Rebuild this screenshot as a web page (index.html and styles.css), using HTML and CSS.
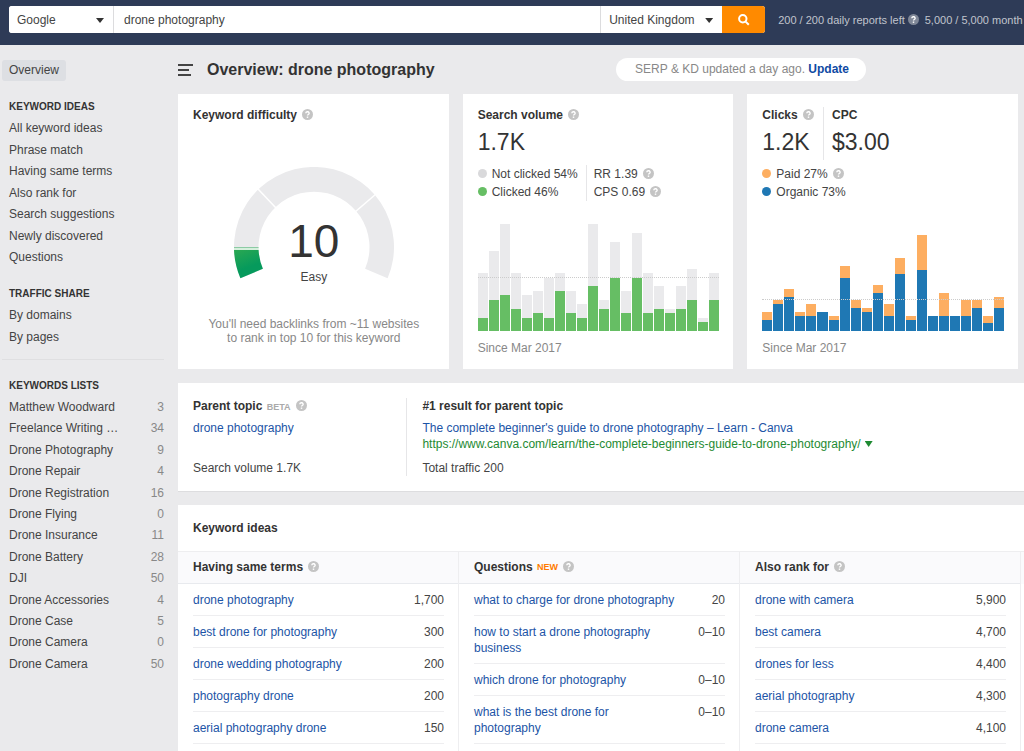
FILE: index.html
```html
<!DOCTYPE html>
<html lang="en">
<head>
<meta charset="utf-8">
<meta name="viewport" content="width=device-width, initial-scale=1">
<title>Overview: drone photography</title>
<link rel="stylesheet" href="styles.css">
</head>
<body>
<svg class="sprite" aria-hidden="true">
  <symbol id="help" viewBox="0 0 12 12">
    <circle cx="6" cy="6" r="6" fill="currentColor"/>
    <path class="help-mark" d="M4.2 4.7a1.8 1.6 0 1 1 2.7 1.3c-.6.4-.9.6-.9 1.2"/>
    <rect class="help-dot" x="5.2" y="8.2" width="1.6" height="1.5"/>
  </symbol>
</svg>

<header class="topbar">
  <form class="search">
    <label class="picker engine"><select aria-label="Search engine"><option>Google</option></select></label>
    <input class="query" type="text" aria-label="Keyword" value="drone photography">
    <label class="picker country"><select aria-label="Country"><option>United Kingdom</option></select></label>
    <button class="go" type="button" aria-label="Search">
      <svg viewBox="0 0 12 12"><circle cx="4.8" cy="4.8" r="3.7"/><path d="M7.6 7.6l3.2 3.2"/></svg>
    </button>
  </form>
  <div class="quota">
    <span>200 / 200 daily reports left</span>
    <svg class="help"><use href="#help"/></svg>
    <span class="rows">5,000 / 5,000 month</span>
  </div>
</header>

<div class="page">
  <nav class="sidebar">
    <a class="current" href="#">Overview</a>
    <h2>KEYWORD IDEAS</h2>
    <ul class="ideas-nav">
      <li><a href="#">All keyword ideas</a></li>
      <li><a href="#">Phrase match</a></li>
      <li><a href="#">Having same terms</a></li>
      <li><a href="#">Also rank for</a></li>
      <li><a href="#">Search suggestions</a></li>
      <li><a href="#">Newly discovered</a></li>
      <li><a href="#">Questions</a></li>
    </ul>
    <h2>TRAFFIC SHARE</h2>
    <ul>
      <li><a href="#">By domains</a></li>
      <li><a href="#">By pages</a></li>
    </ul>
    <hr>
    <h2>KEYWORDS LISTS</h2>
    <ul class="lists-nav">
      <li><a href="#">Matthew Woodward</a><span>3</span></li>
      <li><a href="#">Freelance Writing …</a><span>34</span></li>
      <li><a href="#">Drone Photography</a><span>9</span></li>
      <li><a href="#">Drone Repair</a><span>4</span></li>
      <li><a href="#">Drone Registration</a><span>16</span></li>
      <li><a href="#">Drone Flying</a><span>0</span></li>
      <li><a href="#">Drone Insurance</a><span>11</span></li>
      <li><a href="#">Drone Battery</a><span>28</span></li>
      <li><a href="#">DJI</a><span>50</span></li>
      <li><a href="#">Drone Accessories</a><span>4</span></li>
      <li><a href="#">Drone Case</a><span>5</span></li>
      <li><a href="#">Drone Camera</a><span>0</span></li>
      <li><a href="#">Drone Camera</a><span>50</span></li>
    </ul>
  </nav>

  <main class="main">
    <div class="titlebar">
      <button class="menu" type="button" aria-label="Toggle menu">
        <svg viewBox="0 0 15 12"><path d="M0 1h15M0 6h11M0 11h13"/></svg>
      </button>
      <h1>Overview: drone photography</h1>
      <p class="notice">SERP &amp; KD updated a day ago. <a href="#">Update</a></p>
    </div>

    <div class="cards">
      <section class="card">
        <h3>Keyword difficulty <svg class="help"><use href="#help"/></svg></h3>
        <div class="gauge">
          <svg viewBox="0 0 160 112">
            <defs>
              <linearGradient id="easy" x1="0" y1="0" x2="0.4" y2="1">
                <stop offset="0" stop-color="#2aa852"/><stop offset="0.7" stop-color="#069a5c"/>
              </linearGradient>
            </defs>
            <path fill="#eaeaec" d="M6.4 111.3A80 80 0 1 1 153.6 111.3L131.1 101.8A55.5 55.5 0 1 0 28.9 101.8Z"/>
            <path stroke="#fff" stroke-width="1.6" d="M24 22L42 41M142 27L121 45"/>
            <path fill="#d5efdc" d="M0 80H24.5V83H0Z"/>
            <path fill="#8ccba4" d="M0 80H24.5V81H0Z"/>
            <path fill="url(#easy)" d="M0 83A80 80 0 0 0 6.4 111.3L28.9 101.8A55.5 55.5 0 0 1 24.6 83Z"/>
          </svg>
          <p class="score"><strong>10</strong><span>Easy</span></p>
        </div>
        <p class="advice">You'll need backlinks from ~11 websites<br>to rank in top 10 for this keyword</p>
      </section>

      <section class="card">
        <h3>Search volume <svg class="help"><use href="#help"/></svg></h3>
        <p class="big">1.7K</p>
        <div class="legend">
          <ul>
            <li class="dot gray">Not clicked 54%</li>
            <li class="dot green">Clicked 46%</li>
          </ul>
          <ul class="ratios">
            <li>RR 1.39 <svg class="help"><use href="#help"/></svg></li>
            <li>CPS 0.69 <svg class="help"><use href="#help"/></svg></li>
          </ul>
        </div>
        <div class="chart volume">
          <i style="--t:13;--v:3"></i><i style="--t:18;--v:7"></i><i style="--t:24;--v:8"></i><i style="--t:13;--v:5"></i><i style="--t:8;--v:3"></i><i style="--t:9;--v:4"></i><i style="--t:12;--v:3"></i><i style="--t:13;--v:9"></i><i style="--t:9;--v:4"></i><i style="--t:6;--v:3"></i><i style="--t:24;--v:10"></i>
          <i style="--t:7;--v:5"></i><i style="--t:20;--v:12"></i><i style="--t:9;--v:4"></i><i style="--t:22;--v:12"></i><i style="--t:13;--v:4"></i><i style="--t:10;--v:5"></i><i style="--t:5;--v:4"></i><i style="--t:10;--v:5"></i><i style="--t:14;--v:7"></i><i style="--t:3;--v:2"></i><i style="--t:13;--v:7"></i>
        </div>
        <p class="since">Since Mar 2017</p>
      </section>

      <section class="card">
        <div class="pair">
          <div><h3>Clicks <svg class="help"><use href="#help"/></svg></h3><p class="big">1.2K</p></div>
          <div class="cpc"><h3>CPC</h3><p class="big">$3.00</p></div>
        </div>
        <div class="legend">
          <ul>
            <li class="dot orange">Paid 27% <svg class="help"><use href="#help"/></svg></li>
            <li class="dot blue">Organic 73%</li>
          </ul>
        </div>
        <div class="chart clicks">
          <i style="--t:5;--v:3"></i><i style="--t:8;--v:7"></i><i style="--t:11;--v:9"></i><i style="--t:5;--v:4"></i><i style="--t:7;--v:4"></i><i style="--t:5;--v:5"></i><i style="--t:4;--v:3"></i><i style="--t:17;--v:14"></i><i style="--t:8;--v:6"></i><i style="--t:6;--v:5"></i><i style="--t:12;--v:10"></i>
          <i style="--t:7;--v:4"></i><i style="--t:19;--v:15"></i><i style="--t:4;--v:3"></i><i style="--t:25;--v:16"></i><i style="--t:4;--v:4"></i><i style="--t:10;--v:4"></i><i style="--t:4;--v:4"></i><i style="--t:8;--v:4"></i><i style="--t:8;--v:6"></i><i style="--t:4;--v:2"></i><i style="--t:9;--v:6"></i>
        </div>
        <p class="since">Since Mar 2017</p>
      </section>
    </div>

    <section class="panel parent">
      <div class="topic">
        <h3>Parent topic <small class="beta">BETA</small> <svg class="help"><use href="#help"/></svg></h3>
        <a href="#">drone photography</a>
        <p>Search volume 1.7K</p>
      </div>
      <div class="result">
        <h3>#1 result for parent topic</h3>
        <a href="#">The complete beginner's guide to drone photography – Learn - Canva</a>
        <a class="url" href="#">https://www.canva.com/learn/the-complete-beginners-guide-to-drone-photography/</a>
        <p>Total traffic 200</p>
      </div>
    </section>

    <section class="panel ideas">
      <h3 class="ideas-title">Keyword ideas</h3>
      <div class="columns">
        <div class="column">
          <h3>Having same terms <svg class="help"><use href="#help"/></svg></h3>
          <table>
            <tr><td><a href="#">drone photography</a></td><td>1,700</td></tr>
            <tr><td><a href="#">best drone for photography</a></td><td>300</td></tr>
            <tr><td><a href="#">drone wedding photography</a></td><td>200</td></tr>
            <tr><td><a href="#">photography drone</a></td><td>200</td></tr>
            <tr><td><a href="#">aerial photography drone</a></td><td>150</td></tr>
          </table>
        </div>
        <div class="column">
          <h3>Questions <small class="new">NEW</small> <svg class="help"><use href="#help"/></svg></h3>
          <table>
            <tr><td><a href="#">what to charge for drone photography</a></td><td>20</td></tr>
            <tr><td><a href="#">how to start a drone photography<br>business</a></td><td>0–10</td></tr>
            <tr><td><a href="#">which drone for photography</a></td><td>0–10</td></tr>
            <tr><td><a href="#">what is the best drone for<br>photography</a></td><td>0–10</td></tr>
          </table>
        </div>
        <div class="column">
          <h3>Also rank for <svg class="help"><use href="#help"/></svg></h3>
          <table>
            <tr><td><a href="#">drone with camera</a></td><td>5,900</td></tr>
            <tr><td><a href="#">best camera</a></td><td>4,700</td></tr>
            <tr><td><a href="#">drones for less</a></td><td>4,400</td></tr>
            <tr><td><a href="#">aerial photography</a></td><td>4,300</td></tr>
            <tr><td><a href="#">drone camera</a></td><td>4,100</td></tr>
          </table>
        </div>
      </div>
    </section>
  </main>
</div>
</body>
</html>
```
FILE: styles.css
```css
* { box-sizing: border-box; }

body {
  margin: 0;
  min-height: 100vh;
  display: flex;
  flex-direction: column;
  background: #eaeaec;
  color: #444;
  font: 12px/16px "Liberation Sans", Arial, sans-serif;
}

h1, h2, h3, p, ul { margin: 0; padding: 0; }
ul { list-style: none; }
a { color: #1c54a6; text-decoration: none; }
h3 { font-size: 12px; line-height: 16px; color: #333; }
button { border: 0; padding: 0; background: none; }
select, input { font: inherit; color: #444; border: 0; outline: 0; background: #fff; }

.sprite { position: absolute; width: 0; height: 0; }
.help { width: 11px; height: 11px; margin-left: 2px; color: #c4c4c4; vertical-align: -1px; }
.help-mark { fill: none; stroke: #fff; stroke-width: 1.5px; }
.help-dot { fill: #fff; }

/* Top bar */
.topbar {
  display: flex;
  align-items: flex-start;
  height: 45px;
  padding: 6px 0 0 9px;
  background: #2e3b57;
  overflow: hidden;
}
.search {
  display: flex;
  flex: 0 0 auto;
  width: 74.5%;
  height: 27px;
  border-radius: 3px;
  overflow: hidden;
  background: #fff;
}
.picker { position: relative; display: flex; }
.picker select { width: 100%; padding: 0 8px; appearance: none; }
.picker::after {
  content: "";
  position: absolute;
  right: 9px;
  top: 12px;
  width: 8px;
  height: 5px;
  background: #333;
  clip-path: polygon(0 0, 100% 0, 50% 100%);
  pointer-events: none;
}
.engine { width: 105px; border-right: 1px solid #dcdcde; }
.country { width: 122px; border-left: 1px solid #dcdcde; }
.query { flex: 1; min-width: 0; padding: 0 10px; }
.go {
  display: grid;
  place-items: center;
  width: 43px;
  background: #ff8a00;
}
.go svg { width: 12px; height: 12px; fill: none; stroke: #fff; stroke-width: 2px; }
.quota {
  display: flex;
  align-items: center;
  height: 27px;
  margin-left: 13px;
  gap: 3px;
  white-space: nowrap;
  font-size: 11px;
  color: #c0c4cd;
}
.quota .help { margin-left: 0; color: #7f8797; }
.quota .help-mark { stroke: #2e3b57; }
.quota .rows { margin-left: 3px; }

.page { display: flex; flex: 1; }

/* Sidebar */
.sidebar { flex: 0 0 178px; padding: 15px 14px 0 2px; }
.sidebar a { color: #444; }
.sidebar .current {
  display: inline-block;
  padding: 0 7px;
  line-height: 21px;
  border-radius: 3px;
  background: #dddfe3;
}
.sidebar h2 {
  margin: 19px 0 4px 7px;
  font-size: 10px;
  line-height: 14px;
  color: #333;
}
.sidebar ul {
  display: grid;
  align-content: space-between;
  min-height: 43px;
  padding-left: 7px;
  line-height: 21px;
}
.sidebar .ideas-nav { min-height: 150px; }
.sidebar .lists-nav { min-height: 278px; }
.sidebar li { display: flex; justify-content: space-between; }
.sidebar li span { color: #888; }
.sidebar hr { margin: 11px 0 0; border: 0; border-top: 1px solid #dfdfe1; }

/* Main area */
.main { flex: 1; min-width: 0; display: flex; flex-direction: column; }
.titlebar {
  display: flex;
  align-items: center;
  height: 49px;
  padding-right: 158px;
}
.menu { display: flex; margin-right: 14px; }
.menu svg { width: 15px; height: 12px; stroke: #444; stroke-width: 2px; }
h1 { font-size: 16px; line-height: 20px; color: #333; }
.notice {
  margin-left: auto;
  padding: 0 17px 0 19px;
  line-height: 23px;
  border-radius: 12px;
  background: #fff;
  color: #888;
}
.notice a { font-weight: bold; color: #0f4aa3; }

.cards {
  display: grid;
  grid-template-columns: repeat(3, 1fr);
  gap: 14px;
  padding-right: 6px;
}
.card { padding: 13px 14px 13px 15px; background: #fff; }
.big { margin-top: 5px; font-size: 23px; line-height: 28px; color: #333; }

.gauge {
  display: grid;
  justify-items: center;
  margin: 44px 0 38px;
}
.gauge svg, .score { grid-area: 1 / 1; }
.gauge svg { width: 160px; height: 112px; }
.score { align-self: end; text-align: center; }
.score strong, .score span { display: block; }
.score strong {
  margin-bottom: 5px;
  font-size: 46px;
  line-height: 48px;
  font-weight: normal;
  color: #333;
}
.score span { line-height: 14px; margin-bottom: -5px; }
.advice { text-align: center; line-height: 14px; color: #888; }

.legend { display: flex; margin-top: 9px; line-height: 18px; }
.dot::before {
  content: "";
  display: inline-block;
  width: 9px;
  height: 9px;
  margin-right: 5px;
  border-radius: 50%;
  background: var(--dot);
}
.gray { --dot: #d9d9db; }
.green { --dot: #66be64; }
.orange { --dot: #fdae61; }
.blue { --dot: #1f78b4; }
.ratios { margin-left: 8px; padding-left: 7px; border-left: 1px solid #e6e6e8; }

.chart {
  position: relative;
  display: flex;
  align-items: flex-end;
  gap: 1px;
  height: 107px;
  margin-top: 23px;
}
.chart i {
  flex: 1;
  display: flex;
  align-items: flex-end;
  height: calc(var(--t) * 100% / var(--max));
  background: var(--total);
}
.chart i::before {
  content: "";
  flex: 1;
  height: calc(var(--v) / var(--t) * 100%);
  background: var(--part);
}
.chart::after {
  content: "";
  position: absolute;
  left: 0;
  right: 0;
  bottom: calc(var(--mean) * 100% / var(--max));
  border-top: 1px dotted #ccc;
}
.volume { --max: 24; --mean: 12; --total: #eaeaec; --part: #66be64; }
.clicks { --max: 28; --mean: 8; --total: #fdae61; --part: #1f78b4; }
.since { margin-top: 9px; color: #888; }

.pair { display: flex; height: 49px; }
.cpc {
  height: 53px;
  margin-left: 9px;
  padding-left: 8px;
  border-left: 1px solid #e6e6e8;
}

/* Panels */
.panel { margin-top: 14px; background: #fff; box-shadow: 0 1px #dddddf; }
.parent { display: flex; padding: 15px 0; }
.topic { width: 27%; padding-left: 15px; }
.result { flex: 1; padding: 0 15px; border-left: 1px solid #e6e6e8; }
.parent h3 { margin-bottom: 6px; }
.parent a { display: block; }
.topic p { margin-top: 24px; }
.result p { margin-top: 8px; }
.parent .url { color: #1e8a32; }
.url::after {
  content: "";
  display: inline-block;
  width: 8px;
  height: 6px;
  margin-left: 4px;
  background: #1e8a32;
  clip-path: polygon(0 0, 100% 0, 50% 100%);
  vertical-align: 1px;
}
small { font-size: 9px; line-height: 9px; }
.beta { margin-left: 1px; color: #aaa; }
.new { margin-left: 1px; color: #ff7a00; vertical-align: 1px; }

.ideas { flex: 1; display: flex; flex-direction: column; }
.ideas-title { padding: 15px; }
.columns {
  flex: 1;
  display: grid;
  grid-template-columns: repeat(3, 1fr);
  padding-right: 3px;
  background: linear-gradient(#fafafc 32px, #fff 32px);
  border-top: 1px solid #eeeef0;
}
.column { border-right: 1px solid #eeeef0; }
.column h3 { padding: 7px 15px 8px; border-bottom: 1px solid #e8eaee; }
.column table { width: calc(100% - 29px); margin-left: 15px; border-collapse: collapse; }
.column td {
  padding: 8px 0 7px;
  border-bottom: 1px solid #eeeef0;
  vertical-align: top;
}
.column td:last-child { text-align: right; }
```
